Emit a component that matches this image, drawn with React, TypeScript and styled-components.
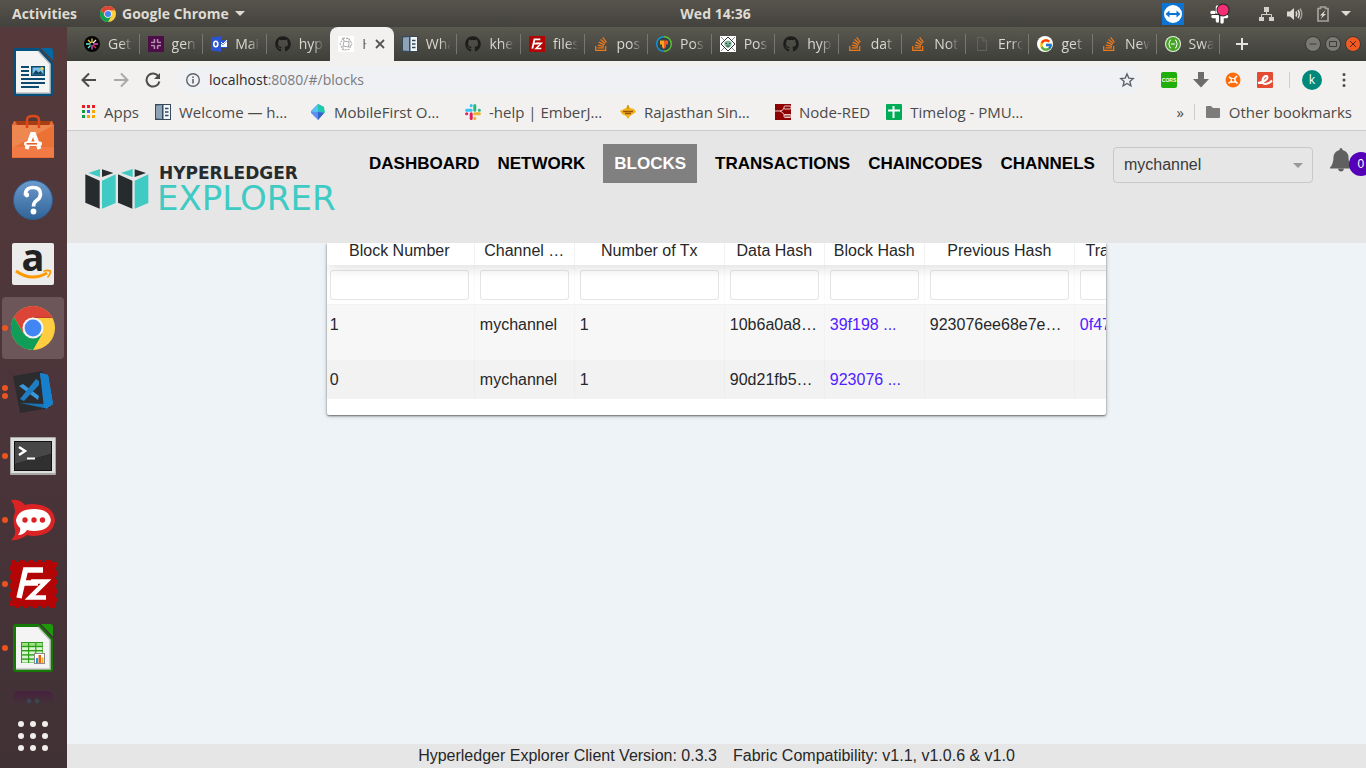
import React from "react";
import styled, { createGlobalStyle } from "styled-components";
import { FaGithub, FaStackOverflow } from "react-icons/fa";
import { FcGoogle } from "react-icons/fc";

const UI = `"Open Sans", "Noto Sans", sans-serif`;
const PAGE = `"Liberation Sans", Arial, sans-serif`;

const Global = createGlobalStyle`
  *, *::before, *::after { box-sizing: border-box; }
  body { margin: 0; font-family: ${UI}; font-size: 14px; overflow: hidden; }
  button { border: 0; padding: 0; margin: 0; background: none; font: inherit; line-height: inherit; color: inherit; }
  a { text-decoration: none; color: inherit; }
  svg { display: block; flex: none; }
`;

const Desktop = styled.div`
  display: flex;
  flex-direction: column;
  min-height: 100vh;
`;

/* ---------- Top panel ---------- */

const TopBar = styled.header`
  display: grid;
  grid-template-columns: 1fr auto 1fr;
  align-items: center;
  height: 27px;
  padding: 0 15px 0 12px;
  background: linear-gradient(#57544d, #44423d);
  color: #dfdbd2;
  font-weight: 700;
  line-height: 20px;
`;

const TopLeft = styled.div`
  display: flex;
  align-items: center;
  gap: 20px;
`;

const ActivitiesButton = styled.button`
  min-width: 68px;
  text-align: left;
`;

const AppMenu = styled.button`
  display: flex;
  align-items: center;
  gap: 6px;
`;

const Clock = styled.button`
  margin-left: 68px;
`;

const Tray = styled.div`
  display: flex;
  align-items: center;
  justify-content: flex-end;
`;

const TrayIcon = styled.span<{ $gap: number }>`
  margin-left: ${(p) => p.$gap}px;
`;

/* ---------- Dock ---------- */

const Workspace = styled.div`
  display: flex;
  flex: 1;
  min-height: 0;
`;

const Dock = styled.nav`
  display: flex;
  flex-direction: column;
  flex: none;
  align-items: center;
  gap: 2px;
  width: 67px;
  padding: 14px 3px 0 2px;
  background: linear-gradient(#563a3b, #4b353a 50%, #403135);
`;

const DockItem = styled.button<{ $active?: boolean }>`
  position: relative;
  display: flex;
  align-items: center;
  justify-content: center;
  width: 62px;
  height: 62px;
  border-radius: 4px;
  background: ${(p) => (p.$active ? "#6d5659" : "transparent")};
`;

const RunDots = styled.span`
  position: absolute;
  left: 0;
  top: 0;
  bottom: 0;
  display: flex;
  flex-direction: column;
  justify-content: center;
  gap: 2px;
`;

const RunDot = styled.i`
  width: 6px;
  height: 6px;
  border-radius: 50%;
  background: #e95420;
`;

const DockPeek = styled.div`
  width: 40px;
  height: 13px;
  margin-top: 10px;
`;

const AppsButton = styled.button`
  margin-top: 15px;
`;

/* ---------- Browser ---------- */

const Browser = styled.section`
  display: flex;
  flex-direction: column;
  flex: 1;
  min-width: 0;
`;

const TabStrip = styled.div`
  display: flex;
  align-items: stretch;
  height: 34px;
  padding-left: 9px;
  background: linear-gradient(#595950, #3f3f3a);
  color: #d9d8d0;
`;

const TabList = styled.div`
  display: flex;
  flex: 1;
  min-width: 0;
`;

const Tab = styled.button<{ $active?: boolean }>`
  position: relative;
  display: flex;
  flex: 1 1 0;
  align-items: center;
  gap: 8px;
  min-width: 0;
  padding-left: 8px;
  border-radius: ${(p) => (p.$active ? "8px 8px 0 0" : "0")};
  background: ${(p) => (p.$active ? "#f2f1f0" : "none")};
  color: ${(p) => (p.$active ? "#4a4a4a" : "inherit")};

  &::after {
    content: "";
    position: absolute;
    right: 0;
    top: 7px;
    width: 1px;
    height: 20px;
    background: ${(p) => (p.$active ? "none" : "#77766f")};
  }

  &:has(+ [aria-selected="true"])::after { background: none; }
`;

const TabTitle = styled.span<{ $short?: boolean }>`
  width: ${(p) => (p.$short ? 5 : 25)}px;
  overflow: hidden;
  text-align: left;
  white-space: nowrap;
  line-height: 20px;
  mask-image: linear-gradient(90deg, #000 ${(p) => (p.$short ? "40%" : "55%")}, transparent);
`;

const StripEnd = styled.div`
  display: flex;
  align-items: center;
  justify-content: space-between;
  flex: none;
  width: 146px;
  padding: 0 5px 0 16px;
`;

const WindowControls = styled.div`
  display: flex;
  gap: 4px;
`;

const Toolbar = styled.div`
  display: flex;
  align-items: center;
  height: 37px;
  padding: 0 14px;
  background: #f2f1f0;
  color: #4b4b4b;
`;

const NavButtons = styled.div`
  display: flex;
  gap: 16px;
  margin-right: 16px;
`;

const AddressBar = styled.div`
  display: flex;
  align-items: center;
  flex: 1;
  gap: 8px;
  height: 28px;
  padding: 0 8px;
  border-radius: 14px;
  background: #eff1f4;
`;

const AddressText = styled.span`
  flex: 1;
  color: #7b7b7f;
  line-height: 20px;
`;

const Host = styled.b`
  color: #2b2b2e;
  font-weight: 400;
`;

const Extensions = styled.div`
  display: flex;
  align-items: center;
  gap: 16px;
  margin-left: 18px;
`;

const Divider = styled.span`
  width: 1px;
  height: 16px;
  background: #cfcecd;
`;

const ProfileArea = styled.div`
  display: flex;
  align-items: center;
  margin-left: 16px;
`;

const Avatar = styled.button`
  width: 20px;
  height: 20px;
  margin: 0 14px 0 12px;
  border-radius: 50%;
  background: #00897b;
  color: #fff;
  font-size: 12px;
  line-height: 18px;
`;

const BookmarkBar = styled.nav`
  display: flex;
  align-items: center;
  height: 33px;
  padding: 0 14px 4px 14px;
  border-bottom: 1px solid #cdcccb;
  background: #f2f1f0;
  color: #4a4a4a;
  font-size: 15px;
  line-height: 20px;
`;

const Bookmark = styled.a`
  display: flex;
  align-items: center;
  gap: 8px;
  margin-right: 16px;
  white-space: nowrap;
`;

const BookmarkLabel = styled.span<{ $full?: boolean }>`
  min-width: ${(p) => (p.$full ? 115 : 0)}px;
`;

const BookmarkEnd = styled.div`
  display: flex;
  align-items: center;
  gap: 10px;
  margin-left: auto;
  white-space: nowrap;
`;

const OtherBookmarks = styled.button`
  display: flex;
  align-items: center;
  gap: 8px;
`;

/* ---------- Explorer page ---------- */

const Page = styled.div`
  display: flex;
  flex-direction: column;
  flex: 1;
  background: #eef3f8;
  font-family: ${PAGE};
  font-size: 16px;
  color: #262729;
`;

const PageHeader = styled.header`
  position: relative;
  z-index: 1;
  display: flex;
  align-items: flex-start;
  height: 112px;
  padding: 13px 0 0 18px;
  overflow: hidden;
  background: #e6e6e6;
`;

const Brand = styled.a`
  display: flex;
  align-items: center;
  flex: none;
  gap: 8px;
  width: 284px;
  margin-top: 20px;
`;

const Wordmark = styled.span`
  display: flex;
  flex-direction: column;
  font-family: "DejaVu Sans", sans-serif;
`;

const WordTop = styled.span`
  margin-left: 2px;
  color: #262b2d;
  font-size: 17px;
  font-weight: 700;
  line-height: 18px;
`;

const WordBottom = styled.span`
  color: #3fcbc3;
  font-size: 34px;
  line-height: 32px;
`;

const MainNav = styled.nav`
  display: flex;
  flex: none;
  gap: 18px;
`;

const NavItem = styled.a<{ $active?: boolean }>`
  padding: ${(p) => (p.$active ? "0 11px" : "0")};
  background: ${(p) => (p.$active ? "#808080" : "none")};
  color: ${(p) => (p.$active ? "#fff" : "#000")};
  font-size: 17px;
  font-weight: 700;
  line-height: 39px;
`;

const ChannelPicker = styled.div`
  display: grid;
  flex: none;
  align-items: center;
  width: 200px;
  height: 36px;
  margin: 3px 0 0 18px;

  & > * { grid-area: 1 / 1; }
  & > svg { justify-self: end; margin-right: 10px; pointer-events: none; }
`;

const ChannelSelect = styled.select`
  width: 100%;
  height: 36px;
  padding: 0 10px 2px;
  appearance: none;
  border: 1px solid #c8c8c8;
  border-radius: 4px;
  background: #e6e6e6;
  color: #3a3a3a;
  font: 16px ${PAGE};
`;

const Notifications = styled.button`
  position: relative;
  flex: none;
  margin: 3px 0 0 17px;
`;

const Badge = styled.span`
  position: absolute;
  left: 19px;
  top: 5px;
  width: 24px;
  height: 24px;
  border-radius: 50%;
  background: #5500b8;
  color: #fff;
  font-size: 12px;
  line-height: 24px;
  text-align: center;
`;

const Content = styled.main`
  flex: 1;
`;

const Panel = styled.section`
  width: 60%;
  margin: 0 auto;
  padding-bottom: 16px;
  overflow: hidden;
  border-radius: 0 0 2px 2px;
  background: #fff;
  box-shadow: 0 1px 2px rgba(0, 0, 0, 0.5), 0 1px 5px rgba(0, 0, 0, 0.2);
`;

const BlockTable = styled.table`
  width: 848px;
  table-layout: fixed;
  border-collapse: separate;
  border-spacing: 0;
`;

const Col = styled.col<{ $w: number }>`
  width: ${(p) => p.$w}px;
`;

const HeadRow = styled.tr`
  position: relative;
  box-shadow: 0 2px 15px rgba(0, 0, 0, 0.15);
`;

const HeadCell = styled.th`
  padding: 0 5px 6px;
  overflow: hidden;
  border-right: 1px solid rgba(0, 0, 0, 0.05);
  font-weight: 400;
  line-height: 16px;
  text-overflow: ellipsis;
  white-space: nowrap;

  &:first-child { padding-left: 3px; }
`;

const FilterCell = styled.td`
  height: 40px;
  padding: 5px 5px 0;
  vertical-align: top;
  border-right: 1px solid rgba(0, 0, 0, 0.02);
  border-bottom: 1px solid rgba(0, 0, 0, 0.05);

  &:first-child { padding-left: 3px; }
`;

const FilterInput = styled.input`
  display: block;
  width: 100%;
  height: 30px;
  padding: 5px 7px;
  border: 1px solid rgba(0, 0, 0, 0.1);
  border-radius: 3px;
  background: #fff;
  font: 16px ${PAGE};
`;

const BodyRow = styled.tr<{ $h: number; $shade: string }>`
  height: ${(p) => p.$h}px;
  background: ${(p) => p.$shade};
`;

const Cell = styled.td`
  padding: 10px 5px 0;
  overflow: hidden;
  border-right: 1px solid rgba(0, 0, 0, 0.02);
  line-height: 19px;
  vertical-align: top;
  white-space: nowrap;

  &:first-child { padding-left: 3px; }
`;

const HashLink = styled.a`
  color: #5020ff;
`;

const PageFooter = styled.footer`
  display: flex;
  justify-content: center;
  gap: 16px;
  background: #e6e6e6;
  line-height: 24px;
`;

/* ---------- Icons ---------- */

const Svg = ({ w, h, vb, children }: { w: number; h?: number; vb?: string; children: React.ReactNode }) => (
  <svg width={w} height={h ?? w} viewBox={vb ?? `0 0 ${w} ${h ?? w}`} fill="none" aria-hidden="true">
    {children}
  </svg>
);

const ChromeIcon = ({ size }: { size: number }) => (
  <Svg w={size} vb="0 0 44 44">
    <circle cx="22" cy="22" r="22" fill="#ffcd40" />
    <path d="M2.9 11A22 22 0 0 1 41 11H22L12.5 27.5Z" fill="#db4437" />
    <path d="M2.9 11A22 22 0 0 0 22 44L31.5 27.5L22 32L12.5 27.5Z" fill="#0f9d58" />
    <path d="M22 12H41.6L41 11H22Z" fill="#c03a2e" />
    <circle cx="22" cy="22" r="10.5" fill="#f4f4f4" />
    <circle cx="22" cy="22" r="8.4" fill="#4285f4" />
  </Svg>
);

const Caret = ({ color }: { color: string }) => (
  <Svg w={10} h={5}>
    <path d="M0 0H10L5 5Z" fill={color} />
  </Svg>
);

const TeamViewer = () => (
  <Svg w={22}>
    <rect width="22" height="22" fill="#0e74d4" />
    <circle cx="11" cy="11" r="9" fill="#fff" />
    <path d="M3.5 11L7.5 7.5V10H14.5V7.5L18.5 11L14.5 14.5V12H7.5V14.5Z" fill="#0e74d4" />
  </Svg>
);

const SlackTray = () => (
  <Svg w={22}>
    <g stroke="#fff" strokeWidth="3.5" strokeLinecap="round">
      <path d="M8.5 4V9M3 9.5H5M4 13.5H8.5M8.5 13.5V18M13 13.5V19M13 13.5H17.5M17.5 9.5H13" />
    </g>
    <path d="M10.700 8V19M3 11.500H18" stroke="#33312d" />
    <circle cx="14" cy="7" r="6.500" fill="#222" />
    <circle cx="14" cy="7" r="5.500" fill="#f52f76" />
  </Svg>
);

const Network = () => (
  <Svg w={15} h={16}>
    <path d="M5 1h5v5H5zM0 11h5v4H0zM10 11h5v4h-5z" fill="#d5d1c8" />
    <path d="M7.500 6V8.500M2.500 11V8.500H12.500V11" stroke="#d5d1c8" />
  </Svg>
);

const Sound = () => (
  <Svg w={16} h={16}>
    <path d="M0 5.500H3L7 2V14L3 10.500H0Z" fill="#dfdbd2" />
    <path d="M9 5.500Q10.500 8 9 10.500M11 4Q13.500 8 11 12" stroke="#dfdbd2" strokeWidth="1.500" />
    <path d="M13 2.500Q16.500 8 13 13.500" stroke="#a19e97" strokeWidth="1.500" />
  </Svg>
);

const Battery = () => (
  <Svg w={12} h={16}>
    <path d="M1 2.500H3.500V1H8.500V2.500H11V15H1Z" stroke="#a5a29b" strokeWidth="1.700" />
    <path d="M8.500 4L3 9.500H5.500L3.500 13L9 8H6.500Z" fill="#dfdbd2" />
  </Svg>
);

const DocShape = ({ main, dark, children }: { main: string; dark: string; children: React.ReactNode }) => (
  <Svg w={40} h={48}>
    <path d="M3 0H26L40 15V45Q40 48 37 48H3Q0 48 0 45V3Q0 0 3 0Z" fill={dark} />
    <path d="M28 0H37Q40 0 40 3V12.500Z" fill={main} />
    <path d="M3 3H25L37 16V45H3Z" fill="#f4f4f4" />
    <path d="M25 3L37 16V45H3" stroke="#c4c4c4" strokeWidth="1.500" />
    {children}
  </Svg>
);

const Writer = () => (
  <DocShape main="#0369a3" dark="#05507c">
    <path d="M8 19H16M8 23H16M8 27H16M8 31H32M8 35H32M8 39H26" stroke="#0c4a70" strokeWidth="2" />
    <rect x="18" y="18" width="14" height="10" fill="#0c4a70" />
    <rect x="19.500" y="19.500" width="11" height="7" fill="#7fc0e8" />
    <path d="M19.500 26.500L23 22L25.500 24.500L27.500 23L30.500 26.500Z" fill="#12455f" />
    <circle cx="29" cy="20.500" r="1.500" fill="#f7d23a" />
  </DocShape>
);

const Calc = () => (
  <DocShape main="#1c9a0b" dark="#157a05">
    <rect x="8" y="18" width="22" height="21" fill="#2f9a1b" />
    {[19, 23.2, 27.4, 31.6, 35.8].map((y) =>
      [9, 16.2, 23.4].map((x) => <rect key={`${x}-${y}`} x={x} y={y} width="6" height="2.8" fill={y === 19 ? "#9be383" : "#d5f7cb"} />)
    )}
    <rect x="21.500" y="29.500" width="10" height="10" fill="#fff" stroke="#8a8a8a" />
    <path d="M23 34h2v5h-2z" fill="#2196e8" />
    <path d="M25.500 31h2.500v8h-2.500z" fill="#e8660c" />
    <path d="M28.500 33.500h2v5.500h-2z" fill="#f2ab2c" />
  </DocShape>
);

const Software = () => (
  <Svg w={42} h={44}>
    <path d="M2 7H40L42 11V44H0V11Z" fill="#e56a33" />
    <path d="M3 7H39L37 11H5Z" fill="#a93c12" />
    <path d="M0 11H42V43H0Z" fill="#ec7134" />
    <path d="M0 11H42L0 34Z" fill="#ee8850" />
    <path d="M0 33H42V43H0Z" fill="#f27b45" />
    <path d="M15 14V6Q15 2 21 2Q27 2 27 6V14" stroke="#d9491a" strokeWidth="2.500" />
    <path d="M14.500 35L20 20H22L27.500 35" stroke="#fff" strokeWidth="4" />
    <rect x="12" y="27.500" width="18" height="4.500" rx="2" fill="#fff" />
    <path d="M14.500 29.800H25" stroke="#e1581e" strokeWidth="1.500" />
  </Svg>
);

const Help = () => (
  <Svg w={40}>
    <defs>
      <linearGradient id="help" x1="0" y1="0" x2="0" y2="1">
        <stop stopColor="#6d9ccd" />
        <stop offset="1" stopColor="#306398" />
      </linearGradient>
    </defs>
    <circle cx="20" cy="20" r="19.500" fill="url(#help)" stroke="#2f5f93" />
    <path d="M12.500 15.500Q12 7.500 20 7.500Q27.500 7.500 27.500 14Q27.500 18 23.500 20.500Q20.500 22.500 20.500 26.500" stroke="#fff" strokeWidth="3.600" />
    <circle cx="13.800" cy="15" r="2.400" fill="#fff" />
    <circle cx="20.500" cy="31.500" r="2.900" fill="#fff" />
  </Svg>
);

const Amazon = () => (
  <Svg w={42}>
    <rect width="42" height="42" rx="2" fill="#ececec" />
    <text x="21" y="28" textAnchor="middle" fontFamily="Open Sans, sans-serif" fontWeight="700" fontSize="38" fill="#222">a</text>
    <path d="M4 28Q19 39 35 30" stroke="#ff9900" strokeWidth="3" />
    <path d="M31.500 28.200Q36 26.500 38.500 28Q38.500 31.500 35.500 34.500" stroke="#ff9900" strokeWidth="1.700" />
  </Svg>
);

const VsCode = () => (
  <Svg w={42} h={44}>
    <path d="M1 6L30 1L38 38L8 43Z" fill="#2c2c2e" />
    <path d="M28 3L36 5L41 34L34 39Z" fill="#2d93dc" />
    <path d="M28 3L32 38H34L41 34L36 5Z" fill="#1780cd" />
    <path d="M7 16L11 14L27 26L26 30Z" fill="#3798dc" />
    <path d="M8 29L24 9L27 11V15L12 31Z" fill="#1f7ec2" />
    <path d="M8 33L32 34V38Z" fill="#1973b7" />
  </Svg>
);

const Terminal = () => (
  <Svg w={46} h={38}>
    <rect width="46" height="38" rx="1" fill="#a9a9a9" />
    <rect x="1" y="1" width="44" height="35" fill="#dedede" />
    <rect x="4" y="4" width="38" height="30" fill="#111" />
    <path d="M5 5H41V17L5 27Z" fill="#474747" />
    <path d="M5 27L41 17V33H5Z" fill="#303030" />
    <path d="M9 10L15 14L9 18" stroke="#fff" strokeWidth="2.500" />
    <path d="M17 21.500H25" stroke="#fff" strokeWidth="2" />
  </Svg>
);

const Rocket = () => (
  <Svg w={46} h={42}>
    <path d="M1 1Q10 0 15 6Q22 4 30 6Q44 9 45 21Q44 33 31 36Q23 38 17 36Q9 42 1 41Q6 37 5 31Q2 21 5 13Q5 6 1 1Z" fill="#db2323" />
    <path d="M24 10Q39 10 41 21Q39 32 24 32Q20 32 17 31Q14 36 8 36Q11 32 10 29Q6 25 6 21Q8 10 24 10Z" fill="#fff" />
    <circle cx="15" cy="21" r="2.700" fill="#db2323" />
    <circle cx="24" cy="21" r="2.700" fill="#db2323" />
    <circle cx="32.500" cy="21" r="2.700" fill="#db2323" />
  </Svg>
);

const FileZilla = ({ size, stamp }: { size: number; stamp?: boolean }) => (
  <Svg w={size} vb="0 0 48 48">
    <rect x={stamp ? 2 : 0} y={stamp ? 2 : 0} width={stamp ? 44 : 48} height={stamp ? 44 : 48} fill="#b30505" />
    {stamp && <rect x="2" y="2" width="44" height="44" stroke="#b30505" strokeWidth="4" strokeDasharray="5 3.8" />}
    <path d="M10 38L16.500 10H34M14 23H29" stroke="#fff" strokeWidth="5.500" />
    <path d="M22 21.500H37L21 37.500H37" stroke="#fff" strokeWidth="4.500" />
  </Svg>
);

const SlackPeek = () => (
  <Svg w={40} h={13}>
    <defs>
      <linearGradient id="peek" x1="0" y1="0" x2="0" y2="1">
        <stop stopColor="#48213f" />
        <stop offset="1" stopColor="#48213f" stopOpacity="0" />
      </linearGradient>
    </defs>
    <path d="M0 13V6Q0 0 6 0H34Q40 0 40 6V13Z" fill="url(#peek)" />
    <circle cx="16" cy="10" r="2.500" fill="#3f4352" />
    <circle cx="24" cy="10" r="2.500" fill="#37484b" />
  </Svg>
);

const AppsGrid = () => (
  <Svg w={30} h={30}>
    {[3, 15, 27].map((y) => [3, 15, 27].map((x) => <circle key={`${x}-${y}`} cx={x} cy={y} r="3" fill="#f1eeec" />))}
  </Svg>
);

const GetIcon = () => (
  <Svg w={16}>
    <circle cx="8" cy="8" r="8" fill="#050505" />
    <g strokeWidth="1.300">
      <path d="M8 7V2.500M7 7L4 4" stroke="#f4ce4b" />
      <path d="M9 7L12 4" stroke="#fff" />
      <path d="M6.500 8H2M6.500 9.500L4 12" stroke="#62f0d1" />
      <path d="M9.500 8H14M8 9V13.500" stroke="#ec4ed8" />
      <path d="M9 9L12 12" stroke="#e52f54" />
    </g>
  </Svg>
);

const SlackTile = () => (
  <Svg w={16}>
    <rect width="16" height="16" fill="#4d0d49" />
    <path d="M6.500 3V7M3 6.500H7M9.500 3V6.500M9.500 6.500H13M3 9.500H6.500M6.500 9.500V13M9.500 9.500V13M9.500 9.500H13" stroke="#b790b3" strokeWidth="1.700" />
    <path d="M8 3V13M3 8H13" stroke="#4d0d49" />
  </Svg>
);

const Outlook = () => (
  <Svg w={16}>
    <rect x="7" y="4" width="9" height="8" fill="#fff" />
    <path d="M9 4H16V5L12 9L9 7ZM9 12H16V11H9Z" fill="#2a55cf" />
    <path d="M10 6L12 8L16 4" stroke="#fff" />
    <path d="M0 1.500L10 0V16L0 14.500Z" fill="#2a55cf" />
    <ellipse cx="4.800" cy="8" rx="2" ry="2.700" stroke="#fff" strokeWidth="1.600" />
  </Svg>
);

const ReactTile = () => (
  <Svg w={16}>
    <rect width="16" height="16" fill="#fff" />
    <path d="M5 2L11 2.500L14 8L11 13.500L5 14L2 8Z" stroke="#999" strokeDasharray="2 1" />
    <path d="M6 5L11 6L10.500 11L5 10Z" stroke="#aaa" />
    <path d="M5 2L6 5M11 2.500V6M14 8L10.500 11M5 14V10" stroke="#b5b5b5" />
  </Svg>
);

const DocsTile = () => (
  <Svg w={16}>
    <rect width="16" height="16" fill="#35495e" />
    <path d="M1 1.500L7 1V15L1 14.500Z" fill="#8fa3b6" />
    <path d="M8.500 1H15V15H8.500Z" fill="#f3f6f8" />
    <path d="M10 4.500H13.500M10 8H13.500M10 11.500H13.500" stroke="#35495e" strokeWidth="1.500" />
  </Svg>
);

const Postman = () => (
  <Svg w={16}>
    <circle cx="8" cy="8" r="7.300" fill="#33434a" />
    <path d="M8 .7A7.300 7.300 0 0 0 8 15.300" stroke="#1496dd" strokeWidth="1.400" />
    <path d="M8 .7A7.300 7.300 0 0 1 8 15.300" stroke="#5fc22c" strokeWidth="1.400" />
    <path d="M4 4.500H8V13L6 11V8.500H4Z" fill="#f9a61a" />
    <path d="M8 4.500H12V8.500H10V11L8 13Z" fill="#f25a1d" />
  </Svg>
);

const DiamondTile = () => (
  <Svg w={16}>
    <rect width="16" height="16" fill="#fff" />
    <path d="M8 1L15 8L8 15L1 8Z" stroke="#333" />
    <path d="M4.500 6Q8 3.500 11.500 6V9Q10 12 8 12Q6 12 4.500 9Z" fill="#7fae97" />
    <path d="M5.500 7.500H7M9 7.500H10.500M6.500 10H9.500" stroke="#1f4436" />
    <path d="M1 1L4 4M15 1L12 4M1 15L4 12M15 15L12 12" stroke="#888" />
  </Svg>
);

const BlankPage = () => (
  <Svg w={16}>
    <path d="M3.500 1.500H9L12.500 5V14.500H3.500ZM9 1.500V5H12.500" stroke="#64645d" />
  </Svg>
);

const GoogleTile = () => (
  <Svg w={16}>
    <circle cx="8" cy="8" r="8" fill="#fff" />
    <FcGoogle x="2" y="2" width="12" height="12" />
  </Svg>
);

const Swagger = () => (
  <Svg w={16}>
    <circle cx="8" cy="8" r="8" fill="#e8f5df" />
    <circle cx="8" cy="8" r="7" fill="#49a32b" />
    <path d="M6 4Q4.500 4 4.500 6Q4.500 8 3.500 8Q4.500 8 4.500 10Q4.500 12 6 12M10 4Q11.500 4 11.500 6Q11.500 8 12.500 8Q11.500 8 11.500 10Q11.500 12 10 12M6 8H10" stroke="#fff" />
  </Svg>
);

const CloseX = () => (
  <Svg w={10}>
    <path d="M1 1L9 9M9 1L1 9" stroke="#555" strokeWidth="1.800" />
  </Svg>
);

const Plus = () => (
  <Svg w={12}>
    <path d="M6 0V12M0 6H12" stroke="#e5e4dc" strokeWidth="2" />
  </Svg>
);

const Control = ({ close, children }: { close?: boolean; children: React.ReactNode }) => (
  <Svg w={16}>
    <circle cx="8" cy="8" r="7.500" fill={close ? "#f05a24" : "#7c7b73"} stroke="#3a3934" />
    <g stroke={close ? "#5c2410" : "#3b3a35"}>{children}</g>
  </Svg>
);

const Back = ({ color, flip }: { color: string; flip?: boolean }) => (
  <Svg w={16}>
    <path transform={flip ? "matrix(-1 0 0 1 16 0)" : undefined} d="M15 8H2M8 1.500L1.500 8L8 14.500" stroke={color} strokeWidth="2" />
  </Svg>
);

const Reload = () => (
  <Svg w={16}>
    <path d="M13.500 4.500A6.500 6.500 0 1 0 14.400 9.500" stroke="#4b4b4b" strokeWidth="2" />
    <path d="M15 1V7H9Z" fill="#4b4b4b" />
  </Svg>
);

const Info = () => (
  <Svg w={16}>
    <circle cx="8" cy="8" r="6.300" stroke="#5f6368" strokeWidth="1.400" />
    <path d="M8 7V11.500M8 4.500V6" stroke="#5f6368" strokeWidth="1.600" />
  </Svg>
);

const Star = () => (
  <Svg w={16}>
    <path d="M8 2L9.800 6.100L14.200 6.500L10.900 9.400L11.900 13.800L8 11.500L4.100 13.800L5.100 9.400L1.800 6.500L6.200 6.100Z" stroke="#5f6368" strokeWidth="1.400" />
  </Svg>
);

const Cors = () => (
  <Svg w={16}>
    <rect width="16" height="16" rx="2" fill="#1fae0c" />
    <text x="8" y="10" textAnchor="middle" fontFamily="Liberation Sans, sans-serif" fontWeight="700" fontSize="5" fill="#fff">CORS</text>
  </Svg>
);

const Down = () => (
  <Svg w={16}>
    <path d="M5 0H11V7H16L8 15.500L0 7H5Z" fill="#6c6c6c" />
  </Svg>
);

const OrangeHub = () => (
  <Svg w={16}>
    <circle cx="8" cy="8" r="7.500" fill="#ff6c0a" />
    <path d="M4 5L7 7L6 10L3.500 11M12 4L9.500 6.500L10.500 9.500L12.500 11.500M7 7L9.500 6.500M6 10H10.500" stroke="#fff" strokeWidth="1.600" />
    <circle cx="8" cy="8" r="1.200" fill="#ff6c0a" />
  </Svg>
);

const Ember = () => (
  <Svg w={16}>
    <rect width="16" height="16" rx="1" fill="#e34b32" />
    <path d="M1 11Q10 9 10.500 5.500Q10.500 3.500 8.500 4Q5.500 5.500 5.500 9Q5.500 12 8.500 12Q12 12 15 8.500" stroke="#fff" strokeWidth="2" />
  </Svg>
);

const MenuDots = () => (
  <Svg w={16}>
    <path d="M8 2.500h.01M8 8h.01M8 13.500h.01" stroke="#4b4b4b" strokeWidth="3" strokeLinecap="round" />
  </Svg>
);

const AppsColor = () => (
  <Svg w={15} h={16}>
    {["#ea1c23", "#ea1c23", "#ea1c23", "#0f9d46", "#4166f0", "#f6a700", "#0f9d46", "#f6a700", "#f6a700"].map((c, i) => (
      <rect key={i} x={1 + (i % 3) * 5} y={1 + Math.floor(i / 3) * 5} width="3" height="3" fill={c} />
    ))}
  </Svg>
);

const MobileFirst = () => (
  <Svg w={16}>
    <path d="M8 0L14 3V9L8 16L1 9V7Z" fill="#5b90f2" />
    <path d="M8 0L14 3L15 9L8 7Z" fill="#1fc9ad" />
    <path d="M1 7.500L8 1V8Z" fill="#59c4f0" />
    <path d="M8 8L14 9L8 16Z" fill="#3462c8" />
  </Svg>
);

const SlackColor = () => (
  <Svg w={16}>
    <g strokeWidth="3" strokeLinecap="round">
      <path d="M6.200 1.600V1.700M1.600 6.200H6.200" stroke="#36c5f0" />
      <path d="M9.800 1.600V6.200M14.400 6.200H14.300" stroke="#2eb67d" />
      <path d="M9.800 9.800H14.400M9.800 14.400V14.300" stroke="#ecb22e" />
      <path d="M1.600 9.800H1.700M6.200 9.800V14.400" stroke="#e01e5a" />
    </g>
  </Svg>
);

const Rajasthan = () => (
  <Svg w={16}>
    <path d="M8 1L10 4L14 5L16 8L13 10L10 12L8 15L6 12L2 10L0 7L4 5L6 4Z" fill="#f1b316" />
    <path d="M3 7.500H13M5 9.500H11" stroke="#9c5310" strokeWidth="1.300" />
    <path d="M8 1V5" stroke="#bd7a0b" />
  </Svg>
);

const NodeRed = () => (
  <Svg w={16}>
    <rect width="16" height="16" fill="#8f0000" />
    <path d="M0 7H5Q8 7 9 4M5 7Q8 8 10 12H16" stroke="#e6c9c9" />
    <rect x="9" y="2" width="7" height="3" rx="1" stroke="#e6c9c9" />
    <rect x="9" y="10.500" width="7" height="3" rx="1" stroke="#e6c9c9" />
  </Svg>
);

const Timelog = () => (
  <Svg w={16}>
    <rect width="16" height="16" rx="1" fill="#00ac56" />
    <path d="M7.500 2V14M2 6.500H14" stroke="#fff" strokeWidth="2" />
  </Svg>
);

const Folder = () => (
  <Svg w={16}>
    <path d="M1 3Q1 2 2 2H6L8 4H14Q15 4 15 5V13Q15 14 14 14H2Q1 14 1 13Z" fill="#7c7c7c" />
  </Svg>
);

const HyperledgerMark = () => (
  <Svg w={64} h={40} vb="0 0 190 120">
    {[0, 98].map((x) => (
      <g key={x} transform={`translate(${x} 0)`}>
        <path d="M0 16L43 35V119L0 101ZM50 1L84 12L50 24Z" fill="#262b2d" />
        <path d="M50 35L91 16V102L50 119ZM9 12L44 0V24Z" fill="#3fcbc3" />
      </g>
    ))}
  </Svg>
);

const Bell = () => (
  <Svg w={22} h={26}>
    <path d="M11 1Q12.500 1 12.500 3Q18 4.500 18.500 10Q18.500 17 22 20.500V21.500H0V20.500Q3.500 17 3.500 10Q4 4.500 9.500 3Q9.500 1 11 1Z" fill="#606060" />
    <path d="M8 21.500H14Q13.500 24.500 11 24.500Q8.500 24.500 8 21.500Z" fill="#606060" />
  </Svg>
);

/* ---------- Data ---------- */

const github = <FaGithub size={16} color="#1d1d1b" />;
const stack = <FaStackOverflow size={16} color="#ee7a1c" />;

const tabs: { icon: React.ReactNode; title: string; active?: boolean }[] = [
  { icon: <GetIcon />, title: "Get" },
  { icon: <SlackTile />, title: "gen" },
  { icon: <Outlook />, title: "Mai" },
  { icon: github, title: "hyp" },
  { icon: <ReactTile />, title: "H", active: true },
  { icon: <DocsTile />, title: "Wha" },
  { icon: github, title: "khe" },
  { icon: <FileZilla size={16} />, title: "files" },
  { icon: stack, title: "pos" },
  { icon: <Postman />, title: "Pos" },
  { icon: <DiamondTile />, title: "Pos" },
  { icon: github, title: "hyp" },
  { icon: stack, title: "dat" },
  { icon: stack, title: "Not" },
  { icon: <BlankPage />, title: "Erro" },
  { icon: <GoogleTile />, title: "get" },
  { icon: stack, title: "New" },
  { icon: <Swagger />, title: "Swa" },
];

const dock: { name: string; icon: React.ReactNode; dots?: number; active?: boolean }[] = [
  { name: "Writer", icon: <Writer /> },
  { name: "Software", icon: <Software /> },
  { name: "Help", icon: <Help /> },
  { name: "Amazon", icon: <Amazon /> },
  { name: "Chrome", icon: <ChromeIcon size={44} />, dots: 1, active: true },
  { name: "Code", icon: <VsCode />, dots: 2 },
  { name: "Terminal", icon: <Terminal />, dots: 1 },
  { name: "Chat", icon: <Rocket />, dots: 1 },
  { name: "FileZilla", icon: <FileZilla size={48} stamp />, dots: 1 },
  { name: "Calc", icon: <Calc />, dots: 1 },
];

const bookmarks: { icon: React.ReactNode; label: string; full?: boolean }[] = [
  { icon: <AppsColor />, label: "Apps" },
  { icon: <DocsTile />, label: "Welcome — h…", full: true },
  { icon: <MobileFirst />, label: "MobileFirst O…", full: true },
  { icon: <SlackColor />, label: "-help | EmberJ…", full: true },
  { icon: <Rajasthan />, label: "Rajasthan Sin…", full: true },
  { icon: <NodeRed />, label: "Node-RED" },
  { icon: <Timelog />, label: "Timelog - PMU…", full: true },
];

const navItems = ["DASHBOARD", "NETWORK", "BLOCKS", "TRANSACTIONS", "CHAINCODES", "CHANNELS"];

const columns = [
  { title: "Block Number", width: 148 },
  { title: "Channel …", width: 100 },
  { title: "Number of Tx", width: 150 },
  { title: "Data Hash", width: 100 },
  { title: "Block Hash", width: 100 },
  { title: "Previous Hash", width: 150 },
  { title: "Transact…", width: 100 },
];

const blocks = [
  { n: "1", channel: "mychannel", tx: "1", data: "10b6a0a8…", hash: "39f198 ...", prev: "923076ee68e7e…", txs: "0f47", h: 55, shade: "#f7f7f7" },
  { n: "0", channel: "mychannel", tx: "1", data: "90d21fb5…", hash: "923076 ...", prev: "", txs: "", h: 39, shade: "#f2f2f2" },
];

export default function App() {
  return (
    <Desktop>
      <Global />
      <TopBar>
        <TopLeft>
          <ActivitiesButton>Activities</ActivitiesButton>
          <AppMenu>
            <ChromeIcon size={16} />
            Google Chrome
            <Caret color="#dfdbd2" />
          </AppMenu>
        </TopLeft>
        <Clock>Wed 14:36</Clock>
        <Tray>
          <TrayIcon $gap={0}><TeamViewer /></TrayIcon>
          <TrayIcon $gap={25}><SlackTray /></TrayIcon>
          <TrayIcon $gap={28}><Network /></TrayIcon>
          <TrayIcon $gap={13}><Sound /></TrayIcon>
          <TrayIcon $gap={14}><Battery /></TrayIcon>
          <TrayIcon $gap={12}><Caret color="#dfdbd2" /></TrayIcon>
        </Tray>
      </TopBar>
      <Workspace>
        <Dock aria-label="Dock">
          {dock.map((d) => (
            <DockItem key={d.name} $active={d.active} aria-label={d.name}>
              {d.dots && (
                <RunDots>
                  {Array.from({ length: d.dots }, (_, i) => <RunDot key={i} />)}
                </RunDots>
              )}
              {d.icon}
            </DockItem>
          ))}
          <DockPeek><SlackPeek /></DockPeek>
          <AppsButton aria-label="Show applications"><AppsGrid /></AppsButton>
        </Dock>
        <Browser>
          <TabStrip>
            <TabList role="tablist">
              {tabs.map((t, i) => (
                <Tab key={i} role="tab" aria-selected={!!t.active} $active={t.active}>
                  {t.icon}
                  <TabTitle $short={t.active}>{t.title}</TabTitle>
                  {t.active && <CloseX />}
                </Tab>
              ))}
            </TabList>
            <StripEnd>
              <button aria-label="New tab"><Plus /></button>
              <WindowControls>
                <button aria-label="Minimize"><Control><path d="M4.500 8H11.500" /></Control></button>
                <button aria-label="Maximize"><Control><path d="M4.500 5.500H11.500V10.500H4.500Z" /></Control></button>
                <button aria-label="Close"><Control close><path d="M5 5L11 11M11 5L5 11" /></Control></button>
              </WindowControls>
            </StripEnd>
          </TabStrip>
          <Toolbar>
            <NavButtons>
              <button aria-label="Back"><Back color="#4b4b4b" /></button>
              <button aria-label="Forward"><Back color="#a9a9a9" flip /></button>
              <button aria-label="Reload"><Reload /></button>
            </NavButtons>
            <AddressBar>
              <Info />
              <AddressText><Host>localhost</Host>:8080/#/blocks</AddressText>
              <button aria-label="Bookmark this page"><Star /></button>
            </AddressBar>
            <Extensions>
              <Cors />
              <Down />
              <OrangeHub />
              <Ember />
            </Extensions>
            <ProfileArea>
              <Divider />
              <Avatar>k</Avatar>
            </ProfileArea>
            <button aria-label="Menu"><MenuDots /></button>
          </Toolbar>
          <BookmarkBar>
            {bookmarks.map((b) => (
              <Bookmark key={b.label} href="#">
                {b.icon}
                <BookmarkLabel $full={b.full}>{b.label}</BookmarkLabel>
              </Bookmark>
            ))}
            <BookmarkEnd>
              <button>»</button>
              <Divider />
              <OtherBookmarks><Folder />Other bookmarks</OtherBookmarks>
            </BookmarkEnd>
          </BookmarkBar>
          <Page>
            <PageHeader>
              <Brand href="#">
                <HyperledgerMark />
                <Wordmark>
                  <WordTop>HYPERLEDGER</WordTop>
                  <WordBottom>EXPLORER</WordBottom>
                </Wordmark>
              </Brand>
              <MainNav>
                {navItems.map((n) => (
                  <NavItem key={n} href="#" $active={n === "BLOCKS"}>{n}</NavItem>
                ))}
              </MainNav>
              <ChannelPicker>
                <ChannelSelect aria-label="Channel">
                  <option>mychannel</option>
                </ChannelSelect>
                <Caret color="#999" />
              </ChannelPicker>
              <Notifications aria-label="Notifications">
                <Bell />
                <Badge>0</Badge>
              </Notifications>
            </PageHeader>
            <Content>
              <Panel>
                <BlockTable>
                  <colgroup>
                    {columns.map((c) => <Col key={c.title} $w={c.width} />)}
                  </colgroup>
                  <thead>
                    <HeadRow>
                      {columns.map((c) => <HeadCell key={c.title}>{c.title}</HeadCell>)}
                    </HeadRow>
                  </thead>
                  <tbody>
                    <tr>
                      {columns.map((c) => (
                        <FilterCell key={c.title}>
                          <FilterInput aria-label={c.title} />
                        </FilterCell>
                      ))}
                    </tr>
                    {blocks.map((b) => (
                      <BodyRow key={b.n} $h={b.h} $shade={b.shade}>
                        <Cell>{b.n}</Cell>
                        <Cell>{b.channel}</Cell>
                        <Cell>{b.tx}</Cell>
                        <Cell>{b.data}</Cell>
                        <Cell><HashLink href="#">{b.hash}</HashLink></Cell>
                        <Cell>{b.prev}</Cell>
                        <Cell>{b.txs && <HashLink href="#">{b.txs}</HashLink>}</Cell>
                      </BodyRow>
                    ))}
                  </tbody>
                </BlockTable>
              </Panel>
            </Content>
            <PageFooter>
              <span>Hyperledger Explorer Client Version: 0.3.3</span>
              <span>Fabric Compatibility: v1.1, v1.0.6 &amp; v1.0</span>
            </PageFooter>
          </Page>
        </Browser>
      </Workspace>
    </Desktop>
  );
}
